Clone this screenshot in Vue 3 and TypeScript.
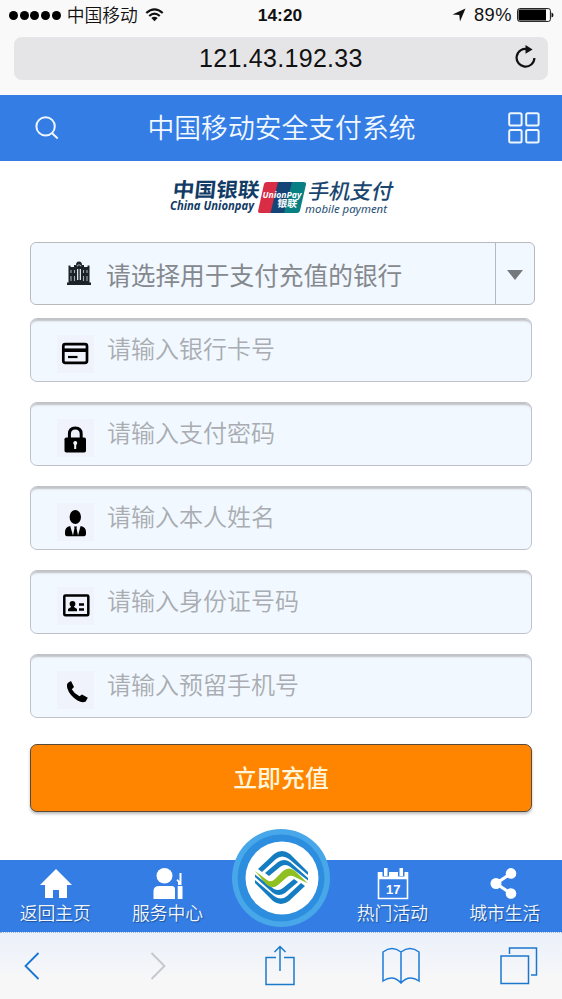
<script setup lang="ts">
import { ref } from 'vue'

interface Field {
  icon: 'card' | 'lock' | 'person' | 'identity' | 'phone'
  placeholder: string
}

const fields: Field[] = [
  { icon: 'card', placeholder: '请输入银行卡号' },
  { icon: 'lock', placeholder: '请输入支付密码' },
  { icon: 'person', placeholder: '请输入本人姓名' },
  { icon: 'identity', placeholder: '请输入身份证号码' },
  { icon: 'phone', placeholder: '请输入预留手机号' },
]

const values = ref<string[]>(fields.map(() => ''))
</script>

<template>
  <div class="screen">
    <header class="browser">
      <div class="status">
        <div class="carrier">
          <span class="dots"><i v-for="n in 5" :key="n"></i></span>
          <span class="carrier-name">中国移动</span>
          <svg class="wifi" width="19" height="14" viewBox="0 0 19 14">
            <path d="M1.300 5Q9.500-2.400 17.700 5M4.200 8Q9.500 3.400 14.800 8" fill="none" stroke="#111" stroke-width="2.200" />
            <path d="M6.300 10Q9.500 7.500 12.700 10L9.500 13.200Z" fill="#111" />
          </svg>
        </div>
        <div class="clock">14:20</div>
        <div class="power">
          <svg width="14" height="14" viewBox="0 0 14 14"><path d="M13.500.5 8 13.500 7.300 7 .5 6.400Z" fill="#111" /></svg>
          <span class="percent">89%</span>
          <svg width="37" height="14" viewBox="0 0 37 14">
            <rect x=".6" y=".6" width="32.800" height="12.800" rx="2" fill="#fff" stroke="#111" />
            <rect x="1.500" y="1.500" width="27.500" height="11" fill="#000" />
            <path d="M34.500 4.500Q36.500 5 36.500 7T34.500 9.500Z" fill="#111" />
          </svg>
        </div>
      </div>
      <div class="address">
        <span class="url">121.43.192.33</span>
        <svg class="reload" width="22" height="24" viewBox="0 0 22 24">
          <path d="M13 4.200A8.900 8.900 0 1 0 19.400 13" fill="none" stroke="#111" stroke-width="2.200" />
          <path d="M10.500 0 17.600 4.600 10.500 8.700Z" fill="#111" />
        </svg>
      </div>
    </header>

    <div class="titlebar">
      <svg width="24" height="24" viewBox="0 0 24 24" fill="none" stroke="#eef6ff" stroke-width="2">
        <circle cx="10.600" cy="10.400" r="9.200" /><path d="m16.900 17 5.800 5.500" />
      </svg>
      <h1>中国移动安全支付系统</h1>
      <svg width="32" height="32" viewBox="0 0 32 32" fill="none" stroke="#eef6ff" stroke-width="2">
        <rect x="1.200" y="1.300" width="12.400" height="12.300" rx="1.500" /><rect x="18.200" y="1.300" width="12.400" height="12.300" rx="1.500" />
        <rect x="1.200" y="18.100" width="12.400" height="12.300" rx="1.500" /><rect x="18.200" y="18.100" width="12.400" height="12.300" rx="1.500" />
      </svg>
    </div>

    <main>
      <svg class="brand" width="240" height="50" viewBox="0 0 240 50">
        <g transform="skewX(-6)">
          <text x="15" y="27.500" font-size="20" font-weight="700" fill="#123c66" textLength="87" lengthAdjust="spacingAndGlyphs">中国银联</text>
        </g>
        <text class="latin" x="10" y="40" font-size="11.500" font-weight="700" fill="#123c66" textLength="84" lengthAdjust="spacingAndGlyphs">China Unionpay</text>
        <path d="M107 12H119L111.500 43H100Q97.600 43 98.200 40.500L104 14Q104.500 12 107 12Z" fill="#d92d45" />
        <path d="M118 12H133L125 43H110.500Z" fill="#154477" />
        <path d="M132 12H143.500Q146.500 12 146 14.500L140 40.500Q139.500 43 136.800 43H124Z" fill="#087f82" />
        <text class="latin" x="102.500" y="27.500" font-size="9.500" font-weight="700" fill="#fff" textLength="39" lengthAdjust="spacingAndGlyphs">UnionPay</text>
        <g transform="skewX(-8)"><text x="122" y="37.500" font-size="10" font-weight="700" fill="#fff" textLength="20">银联</text></g>
        <g transform="skewX(-12)">
          <text x="153" y="29.500" font-size="21" font-weight="500" fill="#19466f" textLength="85" lengthAdjust="spacingAndGlyphs">手机支付</text>
        </g>
        <text class="latin" x="145" y="42.500" font-size="11" fill="#234c72" textLength="82" lengthAdjust="spacingAndGlyphs">mobile payment</text>
      </svg>

      <button type="button" class="bank">
        <svg class="bank-icon" width="26" height="25" viewBox="0 0 26 25">
          <path d="M1 21.500H25V24H1ZM2.500 21.500V4.500H4.500V6H8V4H10Q10 .5 13 .5T16 4H18V6H21.500V4.500H23.500V21.500Z" fill="#1d2328" />
          <path d="M10.800 5.200Q13 2.200 15.200 5.200M5 9V12M8.500 9V12M17.500 9V12M21 9V12M5 15V20M8.500 15V20M17.500 15V20M21 15V20" fill="none" stroke="#a3acb4" stroke-width="1.100" />
          <path d="M11 8H12.300V19H11ZM13.700 8H15V19H13.700Z" fill="#dde4ea" />
        </svg>
        <span class="bank-text">请选择用于支付充值的银行</span>
        <span class="bank-arrow"><svg width="16" height="10" viewBox="0 0 16 10"><path d="M0 0H16L8 10Z" fill="#76797c" /></svg></span>
      </button>

      <form class="fields" @submit.prevent>
        <label v-for="(field, i) in fields" :key="field.icon" class="field">
          <svg class="field-icon" width="37" height="38" viewBox="0 0 37 38">
            <g v-if="field.icon === 'card'">
              <rect x="6.300" y="9.200" width="23.700" height="18.600" rx="2" fill="none" stroke="#000" stroke-width="2.700" />
              <path d="M6 15.200H30" stroke="#000" stroke-width="3.600" /><path d="M11 22H20.500" stroke="#000" stroke-width="2.200" />
            </g>
            <g v-else-if="field.icon === 'lock'">
              <rect x="7.500" y="18.500" width="21.500" height="15" rx="1.800" />
              <path d="M12.400 20V15Q12.400 9 18.300 9T24.200 15V20" fill="none" stroke="#000" stroke-width="3" />
              <path d="M16.500 25A2 2 0 1 1 20 25L19.200 26V30H17.200V26Z" fill="#f2f5fc" />
            </g>
            <g v-else-if="field.icon === 'person'">
              <ellipse cx="18.300" cy="14" rx="5.700" ry="7" />
              <path d="M13.200 23Q8 24 8 29V31Q8 33.300 11 33.300H26Q29 33.300 29 31V29Q29 24 23.600 23L21 32.500 19.500 25 20 23.500H17L17.500 25 16 32.500Z" />
            </g>
            <g v-else-if="field.icon === 'identity'">
              <rect x="7.300" y="8.600" width="24" height="19.600" rx="1" fill="none" stroke="#000" stroke-width="2.500" />
              <circle cx="15.500" cy="16.800" r="2.900" /><path d="M14 18H17V20L20 22V24.200H11V22L14 20ZM22 16.300H27V18.700H22ZM22 21.300H27V23.700H22Z" />
            </g>
            <path v-else d="M10.700 12 14 10 17 16 14.800 18.200Q17.500 23 22.500 25.300L25 23.400 30.800 26.800 28.700 30.500Q25.500 32.500 20.500 29.500Q12.500 24.500 10.200 17Q9.500 13.500 10.700 12Z" />
          </svg>
          <input v-model="values[i]" type="text" :placeholder="field.placeholder" />
        </label>
        <button type="submit" class="submit">立即充值</button>
      </form>
    </main>

    <nav class="tabs">
      <a class="tab">
        <svg width="32" height="32" viewBox="0 0 32 32"><path d="M16 1 32 17H27V30H19V22H13V30H5V17H0Z" fill="#fff" /></svg>
        <span>返回主页</span>
      </a>
      <a class="tab">
        <svg width="32" height="32" viewBox="0 0 32 32" fill="#fff">
          <ellipse cx="11.500" cy="7.700" rx="8" ry="7.700" /><path d="M.5 31V23Q.5 18 6.500 18H18.500Q22 18 22 21V31ZM24.700 18H29.500V31H24.700ZM26.500 5H28.500V17H25V14L23.500 12.500 24.500 11 26.500 13Z" />
        </svg>
        <span>服务中心</span>
      </a>
      <a class="tab home">
        <svg class="medallion" width="98" height="98" viewBox="0 0 98 98">
          <circle cx="49" cy="49" r="49" fill="#48a7e8" /><circle cx="49" cy="49" r="43.500" fill="#2d8edf" /><circle cx="50" cy="49" r="36.500" fill="#fff" />
          <g fill="#147cc1">
            <path d="M26 40 42 25Q50 19 58 25L76 43V46L57 30Q50 25 44 30L30 43Z" />
            <path d="M33 44 46 33Q52 29 58 33L76 49V51.500L57 37Q52 34.500 48 38L37 47Z" />
          </g>
          <g fill="#147cc1" transform="rotate(180 49.500 48.500)">
            <path d="M26 40 42 25Q50 19 58 25L76 43V46L57 30Q50 25 44 30L30 43Z" />
            <path d="M33 44 46 33Q52 29 58 33L76 49V51.500L57 37Q52 34.500 48 38L37 47Z" />
          </g>
          <path d="M23 42 35 51Q39 54 43 50L51 42Q57 37 63 42L76 54.500 63 48Q58 45 54 49L46 56Q40 61 34 55Z" fill="#8fbf20" />
        </svg>
      </a>
      <a class="tab">
        <svg width="32" height="32" viewBox="0 0 32 32">
          <path d="M1.500 5H30.500V30.500H1.500ZM1 10.500H31" fill="none" stroke="#fff" stroke-width="1.600" /><path d="M1 4H31V11H1Z" fill="#fff" />
          <path d="M5.500 2H12V8.500H5.500ZM21 2H27.500V8.500H21Z" fill="#337de5" /><path d="M7 0H10.500V8H7ZM22.500 0H26V8H22.500Z" fill="#fff" />
          <text class="day" x="16.200" y="25.500" font-size="13" font-weight="700" text-anchor="middle" fill="#fff">17</text>
        </svg>
        <span>热门活动</span>
      </a>
      <a class="tab">
        <svg width="32" height="32" viewBox="0 0 32 32" fill="#fff"><path d="M21 5.500 6 15.500 21 25.500" fill="none" stroke="#fff" stroke-width="3.200" /><circle cx="21" cy="5.400" r="5.300" /><circle cx="6" cy="15.500" r="5.500" /><circle cx="21" cy="25.500" r="5.300" /></svg>
        <span>城市生活</span>
      </a>
    </nav>

    <footer class="toolbar">
      <svg width="16" height="28" viewBox="0 0 16 28"><path d="M14.500 1 1.500 14 14.500 27" stroke="#1674d2" stroke-width="1.800" /></svg>
      <svg width="16" height="28" viewBox="0 0 16 28"><path d="M1.500 1 14.500 14 1.500 27" stroke="#c3c6ca" stroke-width="1.800" /></svg>
      <svg width="30" height="42" viewBox="0 0 30 42"><path d="M11 12.500H1V39.500H29V12.500H19M15 26V1.500M9.500 7 15 1.500 20.500 7" stroke="#1c7bc9" stroke-width="1.500" /></svg>
      <svg width="38" height="38" viewBox="0 0 38 38"><path d="M19 36V5Q10-2 1 5V34Q11 27 19 36Q27 27 37 34V5Q28-2 19 5" stroke="#1c7bd9" stroke-width="1.500" /></svg>
      <svg width="38" height="38" viewBox="0 0 38 38"><path d="M1 9H28.500V36.500H1ZM9.500 7V1H36.500V28H31" stroke="#1c78cc" stroke-width="1.500" /></svg>
    </footer>
  </div>
</template>

<style>
body {
  margin: 0;
  background: #fff;
}
</style>

<style scoped>
.screen {
  width: 562px;
  height: 999px;
  display: flex;
  flex-direction: column;
  overflow: hidden;
  background: #fff;
  color: #111;
  font-family: "Noto Sans CJK SC", sans-serif;
}

svg {
  display: block;
  flex: none;
}

button,
input {
  box-sizing: border-box;
  margin: 0;
  font-family: inherit;
}

.browser {
  height: 95px;
  flex: none;
  background: #f9f9f9;
}

.status {
  height: 37px;
  box-sizing: border-box;
  padding: 0 8px 7px 9px;
  display: grid;
  grid-template-columns: 1fr auto 1fr;
  align-items: center;
}

.carrier,
.power,
.dots {
  display: flex;
  align-items: center;
}

.dots {
  gap: 1.7px;
}

.dots i {
  width: 9px;
  height: 9px;
  border-radius: 50%;
  background: #000;
}

.carrier-name {
  margin: 0 7px 2px 6px;
  font-size: 17.8px;
  line-height: 26px;
  font-weight: 350;
}

.clock {
  margin-right: 3px;
  font: 700 17.4px/28px "Liberation Sans", Arial, sans-serif;
}

.power {
  justify-content: flex-end;
}

.percent {
  margin: 0 5px 0 8px;
  font: 18.3px/28px "Liberation Sans", Arial, sans-serif;
  letter-spacing: 0.5px;
}

.address {
  height: 43px;
  margin: 0 14px;
  box-sizing: border-box;
  padding: 0 11px 0 185px;
  display: flex;
  align-items: center;
  justify-content: space-between;
  border-radius: 8px;
  background: #e5e5e7;
}

.reload {
  margin-bottom: 3px;
}

.url {
  margin-bottom: 2px;
  font: 25px/40px "Liberation Sans", Arial, sans-serif;
  letter-spacing: 0.3px;
}

.titlebar {
  height: 66px;
  flex: none;
  box-sizing: border-box;
  padding: 0 22px 0 35px;
  display: flex;
  align-items: center;
  justify-content: space-between;
  background: #337de5;
}

.titlebar h1 {
  margin: 0 4px 2px 0;
  color: #f2f8ff;
  font-size: 26.8px;
  line-height: 64px;
  font-weight: 350;
}

main {
  height: 699px;
  flex: none;
  box-sizing: border-box;
  padding: 9px 27px 0 30px;
}

.brand {
  margin: 0 0 22px 130px;
}

.brand .latin {
  font-family: "Noto Sans", "Open Sans", sans-serif;
  font-style: italic;
}

.bank {
  width: 505px;
  height: 63px;
  padding: 0 0 0 35px;
  display: flex;
  align-items: center;
  border: 1px solid #b7babd;
  border-radius: 6px;
  background: #f1f8ff;
  text-align: left;
}

.bank-text {
  flex: 1;
  margin: 0 0 0 14px;
  color: #85898e;
  font-size: 24.7px;
  line-height: 36px;
  white-space: nowrap;
}

.bank-arrow {
  width: 38px;
  height: 61px;
  flex: none;
  display: grid;
  place-items: center;
  border-left: 1px solid #b7babd;
}

.bank-arrow svg {
  margin-top: 3px;
}

.fields {
  margin-top: 13px;
  display: flex;
  flex-direction: column;
  gap: 20px;
}

.field {
  width: 502px;
  height: 64px;
  box-sizing: border-box;
  padding: 0 20px 0 26px;
  display: flex;
  align-items: center;
  border: 1px solid #bfc3c8;
  border-radius: 7px;
  background: #f1f8ff;
  box-shadow: inset 0 4px 2px -2px #bfc1c5;
}

.field-icon {
  margin-top: 7px;
  background: #f0f3fc;
}

.field input {
  flex: 1;
  min-width: 0;
  height: 44px;
  margin: 0 0 5px 13px;
  padding: 0;
  border: 0;
  outline: 0;
  background: transparent;
  font-size: 24px;
  font-weight: 350;
}

.field input::placeholder {
  color: #a9acb0;
  opacity: 1;
}

.submit {
  width: 502px;
  height: 68px;
  margin-top: 6px;
  padding: 0 0 4px;
  border: 1px solid #594b3b;
  border-radius: 7px;
  background: #ff8500;
  box-shadow: 0 2px 3px #bbb;
  color: #fff6dc;
  font-size: 23.9px;
  font-weight: 500;
}

.tabs {
  height: 72px;
  flex: none;
  display: grid;
  grid-template-columns: repeat(5, 1fr);
  background: #337de5;
}

.tab {
  display: flex;
  flex-direction: column;
  align-items: center;
  padding-top: 8px;
}

.tab span {
  margin: -2px 2px 0 0;
  color: #f2f7ff;
  font-size: 17.8px;
  line-height: 28px;
  font-weight: 350;
  text-shadow: 1px 1px 1px #1c5299;
}

.tab.home {
  position: relative;
}

.medallion {
  position: absolute;
  top: -31px;
  left: 50%;
  transform: translateX(-50%);
}

.day {
  font-family: "Liberation Sans", Arial, sans-serif;
}

.toolbar {
  height: 67px;
  flex: none;
  box-sizing: border-box;
  display: grid;
  grid-template-columns: 64px 188px 56px 186px 50px;
  align-items: center;
  justify-items: center;
  border-top: 1px dotted #9db3d3;
  background: linear-gradient(#ebf1fb, #f7f7f8 70%);
}

.toolbar svg {
  fill: none;
}
</style>
